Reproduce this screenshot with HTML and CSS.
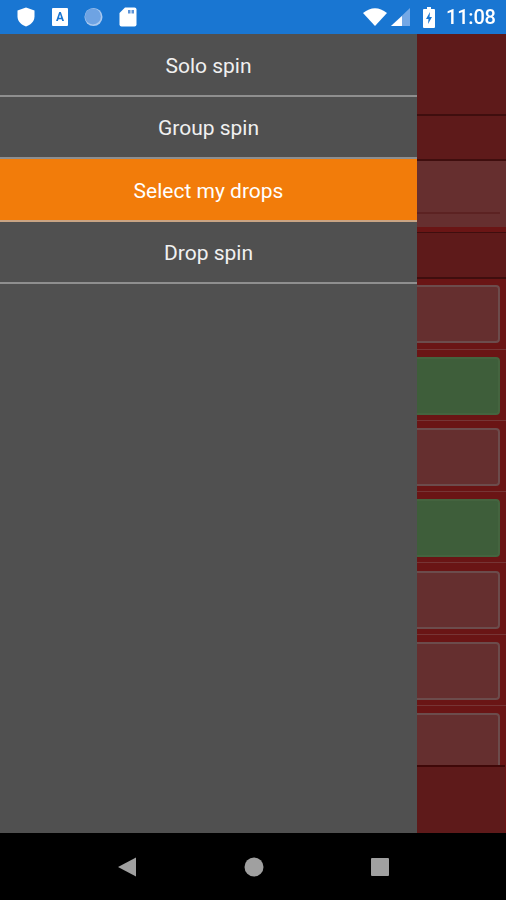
FILE: index.html
```html
<!DOCTYPE html>
<html lang="en">
<head>
    <meta charset="UTF-8">
    <meta name="viewport" content="width=device-width, initial-scale=1.0">
    <title>Spin menu</title>
    <link rel="stylesheet" href="styles.css">
</head>
<body>
<div class="phone">

    <div class="status-bar">
        <div class="status-left">
            <svg class="icon shield" width="18" height="20" viewBox="0 0 18 20"><path d="M9 0.5 L17.5 3.5 V9.5 C17.5 14.5 13.5 18 9 19.5 C4.5 18 0.5 14.5 0.5 9.5 V3.5 Z" fill="#fff"/></svg>
            <span class="app-a">A</span>
            <svg class="icon" width="19" height="20" viewBox="0 0 20 20"><circle cx="10" cy="10" r="9.5" fill="#a9c9f0"/><circle cx="9.4" cy="9.4" r="8.4" fill="#6ea3e3"/></svg>
            <svg class="icon" width="18" height="20" viewBox="0 0 18 20"><path d="M6 0.5 H15.5 Q17.5 0.5 17.5 2.5 V17.5 Q17.5 19.5 15.5 19.5 H2.5 Q0.5 19.5 0.5 17.5 V6 Z" fill="#fff"/><rect x="9" y="3" width="2.5" height="3.5" fill="#5c93d8"/><rect x="12.5" y="3" width="2.5" height="3.5" fill="#5c93d8"/></svg>
        </div>
        <div class="status-right">
            <svg class="icon wifi" width="24" height="18" viewBox="0 0 24 18"><path d="M0 5 Q12 -4.5 24 5 L12 18 Z" fill="#fff"/></svg>
            <svg class="icon signal" width="19" height="18" viewBox="0 0 19 18"><path d="M19 0 V18 H0 Z" fill="#74a8e6"/><path d="M11 8 V18 H0 Z" fill="#fff"/></svg>
            <svg class="icon battery" width="12" height="21" viewBox="0 0 12 21"><path d="M4 0 H8 V2 H11 Q12 2 12 3 V20 Q12 21 11 21 H1 Q0 21 0 20 V3 Q0 2 1 2 H4 Z" fill="#fff"/><path d="M7 5 L3 12 H5.5 L5 17 L9 10 H6.5 Z" fill="#1976d2"/></svg>
            <span class="clock">11:08</span>
        </div>
    </div>

    <div class="main">
        <nav class="drawer">
            <div class="menu-item">Solo spin</div>
            <div class="menu-item">Group spin</div>
            <div class="menu-item active">Select my drops</div>
            <div class="menu-item">Drop spin</div>
        </nav>

        <div class="behind">
            <div class="head-row tall"></div>
            <div class="head-row"></div>
            <div class="input-row"><div class="input-box"></div></div>
            <div class="head-row last"></div>

            <div class="card-row first"><div class="card"></div></div>
            <div class="card-row"><div class="card green"></div></div>
            <div class="card-row"><div class="card"></div></div>
            <div class="card-row"><div class="card green"></div></div>
            <div class="card-row"><div class="card"></div></div>
            <div class="card-row"><div class="card"></div></div>
            <div class="card-row cut"><div class="card"></div></div>

            <div class="footer-row"></div>
        </div>
    </div>

    <div class="nav-bar">
        <svg width="20" height="20" viewBox="0 0 20 20"><path d="M1 10 L19 0.5 V19.5 Z" fill="#a0a0a0"/></svg>
        <svg width="20" height="20" viewBox="0 0 20 20"><circle cx="10" cy="10" r="9.5" fill="#a0a0a0"/></svg>
        <svg width="20" height="20" viewBox="0 0 20 20"><rect x="1" y="1" width="18" height="18" rx="1" fill="#a0a0a0"/></svg>
    </div>

</div>
</body>
</html>
```
FILE: styles.css
```css
html, body { margin: 0; padding: 0; }
body { background: #000; font-family: Roboto, "Liberation Sans", sans-serif; }

.phone { width: 506px; height: 900px; display: flex; flex-direction: column; overflow: hidden; }

.status-bar { height: 34px; background: #1976d2; display: flex; justify-content: space-between; align-items: center; filter: blur(0.5px); }
.status-left { display: flex; align-items: center; gap: 16px; padding-left: 17px; }
.status-right { display: flex; align-items: center; padding-right: 10px; }
.icon { display: block; }
.shield { margin-right: 1px; }
.wifi { margin-right: 4px; }
.signal { margin-right: 13px; }
.battery { margin-right: 11px; }
.clock { color: #fff; font-size: 20px; font-weight: 500; width: 50px; letter-spacing: -0.2px; }
.app-a { width: 16px; height: 18px; background: #fff; color: #1976d2; font-size: 12px; font-weight: 700; text-align: center; line-height: 18px; border-radius: 1px; }

.main { height: 799px; display: flex; }

.drawer { width: 417px; background: #505050; flex-shrink: 0; }
.menu-item { height: 62px; box-sizing: border-box; padding-top: 2px; border-bottom: 2px solid #8f8f8f; display: flex; align-items: center; justify-content: center; color: #f0f0f0; font-size: 21px; }
.menu-item:first-child { height: 63px; }
.menu-item.active { height: 63px; background: #f27c0a; color: #fff; border-bottom-color: #c9a484; }

.behind { flex: 1; background: #6a1515; overflow: hidden; display: flex; flex-direction: column; filter: blur(0.6px); }

.head-row { height: 43px; background: #5e1a1a; border-bottom: 2px solid #3f0e0e; flex-shrink: 0; }
.head-row.tall { height: 80px; }
.head-row.last { height: 44px; }

.input-row { height: 71px; flex-shrink: 0; border-bottom: 1px solid #3f0e0e; }
.input-box { height: 66px; background: #662f2f; position: relative; }
.input-box::after { content: ""; display: block; height: 2px; margin-right: 6px; background: #5c2222; position: relative; top: 51px; }

.card-row { height: 70.33px; flex-shrink: 0; border-bottom: 1px solid #763535; }
.card-row.first { height: 69.5px; }
.card-row.first .card { margin-top: 6px; }
.card-row.cut { height: 59px; border-bottom: 0; overflow: hidden; }
.card { height: 58px; margin: 7.2px 6px 0 -10px; background: #652f2f; border: 2px solid #6c4c4c; border-radius: 4px; box-sizing: border-box; }
.card.green { background: #3e5e3a; border-color: #44643f; }

.footer-row { height: 66px; background: #5e1a1a; border-top: 2px solid #3f0808; flex-shrink: 0; margin-right: 1px; }

.nav-bar { flex: 1; background: #000; display: flex; align-items: center; gap: 106.5px; padding-left: 117px; filter: blur(0.4px); }
```
